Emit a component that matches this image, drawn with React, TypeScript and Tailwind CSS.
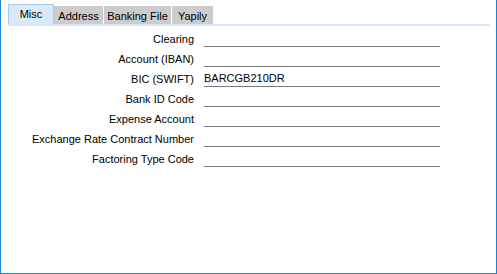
const fields: { label: string; value?: string }[] = [
  { label: 'Clearing' },
  { label: 'Account (IBAN)' },
  { label: 'BIC (SWIFT)', value: 'BARCGB210DR' },
  { label: 'Bank ID Code' },
  { label: 'Expense Account' },
  { label: 'Exchange Rate Contract Number' },
  { label: 'Factoring Type Code' },
]

export default function App() {
  return (
    <div
      className="w-[497px] h-[274px] bg-white border-l border-r border-b border-[#1a84dc] text-[11px] text-black"
      style={{ fontFamily: '"Liberation Sans", Arial, sans-serif' }}
    >
      <div className="pl-[7px] pr-[6px]">
        <div className="flex items-end h-[24px]">
          <div className="h-[20px] w-[46px] bg-[#d9e9f8] border border-b-0 border-[#a6cbef] flex items-center justify-center leading-none">
            Misc
          </div>
          <div className="h-[18px] w-[49px] bg-[#cccccc] flex items-center justify-center leading-none pt-[2px]">
            Address
          </div>
          <div className="ml-[1px] h-[18px] w-[67px] bg-[#cccccc] flex items-center justify-center leading-none pt-[2px]">
            Banking File
          </div>
          <div className="ml-[1px] h-[18px] w-[41px] bg-[#cccccc] flex items-center justify-center leading-none pt-[2px]">
            Yapily
          </div>
        </div>
        <div className="h-[2px] bg-[#d6e7f9]" />
      </div>

      <div className="mt-[1px]">
        {fields.map((f) => (
          <div key={f.label} className="flex h-[20px] items-end">
            <div className="w-[193px] text-right leading-[13px] pb-[1px]">{f.label}</div>
            <div className="ml-[10px] w-[236px] h-[20px] border-b border-[#7a7a7a] flex items-end leading-[13px] pb-[1px]">
              {f.value}
            </div>
          </div>
        ))}
      </div>
    </div>
  )
}
